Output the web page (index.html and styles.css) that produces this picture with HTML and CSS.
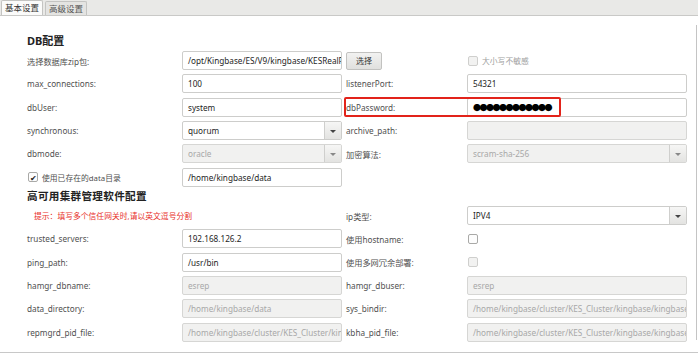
FILE: index.html
```html
<!DOCTYPE html>
<html lang="zh">
<head>
  <meta charset="UTF-8" />
  <title>基本设置</title>
  <link rel="stylesheet" href="styles.css">
</head>
<body>
  <div class="tabs">
    <div class="tab active">基本设置</div>
    <div class="tab">高级设置</div>
  </div>

  <div class="panel">
    <h2 class="section">DB配置</h2>
    <div class="form">
      <label class="lbl">选择数据库zip包:</label>
      <div class="field"><span class="txt">/opt/Kingbase/ES/V9/kingbase/KESRealPro</span></div>
      <div class="lbl2"><button class="btn">选择</button></div>
      <div class="check-line"><span class="box disabled"></span><span class="muted">大小写不敏感</span></div>

      <label class="lbl">max_connections:</label>
      <div class="field"><span class="txt">100</span></div>
      <label class="lbl2">listenerPort:</label>
      <div class="field"><span class="txt">54321</span></div>

      <label class="lbl">dbUser:</label>
      <div class="field"><span class="txt">system</span></div>
      <label class="lbl2 pw-wrap">dbPassword:<span class="mark"></span></label>
      <div class="field"><span class="txt dots">●●●●●●●●●●●●</span></div>

      <label class="lbl">synchronous:</label>
      <div class="field combo"><span class="txt">quorum</span><span class="arrow"></span></div>
      <label class="lbl2">archive_path:</label>
      <div class="field off"></div>

      <label class="lbl">dbmode:</label>
      <div class="field combo off"><span class="txt">oracle</span><span class="arrow"></span></div>
      <label class="lbl2">加密算法:</label>
      <div class="field combo off"><span class="txt">scram-sha-256</span><span class="arrow"></span></div>

      <div class="lbl check-line"><span class="box checked">&#10004;</span>使用已存在的data目录</div>
      <div class="field"><span class="txt">/home/kingbase/data</span></div>
    </div>

    <h2 class="section second">高可用集群管理软件配置</h2>
    <div class="form">
      <div class="hint">提示：填写多个信任网关时,请以英文逗号分割</div>
      <label class="lbl2">ip类型:</label>
      <div class="field combo"><span class="txt">IPV4</span><span class="arrow"></span></div>

      <label class="lbl">trusted_servers:</label>
      <div class="field"><span class="txt">192.168.126.2</span></div>
      <label class="lbl2">使用hostname:</label>
      <div class="check-line"><span class="box"></span></div>

      <label class="lbl">ping_path:</label>
      <div class="field"><span class="txt">/usr/bin</span></div>
      <label class="lbl2">使用多网冗余部署:</label>
      <div class="check-line"><span class="box disabled"></span></div>

      <label class="lbl">hamgr_dbname:</label>
      <div class="field off"><span class="txt">esrep</span></div>
      <label class="lbl2">hamgr_dbuser:</label>
      <div class="field off"><span class="txt">esrep</span></div>

      <label class="lbl">data_directory:</label>
      <div class="field off"><span class="txt">/home/kingbase/data</span></div>
      <label class="lbl2">sys_bindir:</label>
      <div class="field off"><span class="txt">/home/kingbase/cluster/KES_Cluster/kingbase/kingbase/bin</span></div>

      <label class="lbl">repmgrd_pid_file:</label>
      <div class="field off"><span class="txt">/home/kingbase/cluster/KES_Cluster/kingbase</span></div>
      <label class="lbl2">kbha_pid_file:</label>
      <div class="field off"><span class="txt">/home/kingbase/cluster/KES_Cluster/kingbase/kingbase/hamgr</span></div>
    </div>
  </div>
  <div class="bottom-line"></div>
</body>
</html>
```

FILE: styles.css
```css
body {
  margin: 0;
  padding: 0;
  background: #ffffff;
  font-family: "Noto Sans", "Noto Sans CJK SC", sans-serif;
  color: #4a4a4a;
  width: 698px;
  height: 354px;
  overflow: hidden;
}
.tabs {
  display: flex;
  align-items: flex-end;
  height: 16px;
  background: #e9e9e7;
  border-bottom: 1px solid #c9c9c7;
  box-sizing: border-box;
  padding-left: 1px;
}
.tab {
  font-size: 8.5px;
  line-height: 13px;
  height: 14px;
  padding: 0 3px;
  margin-right: 2px;
  color: #555;
  border: 1px solid #c4c4c2;
  border-bottom: none;
  border-radius: 2px 2px 0 0;
  background: #e4e4e2;
  box-sizing: border-box;
}
.tab.active {
  background: #fbfbfa;
  color: #333;
  height: 15px;
}
.panel {
  margin-top: 9px;
  padding: 8px 0 0 27px;
  width: 697px;
  height: 315px;
  border-right: 1px solid #c4c4c4;
  box-sizing: border-box;
}
.form {
  display: grid;
  grid-template-columns: 155px 160px 125px 220px;
  grid-auto-rows: 23.33px;
  align-items: center;
  font-size: 8.2px;
}
.section {
  margin: 0;
  height: 16px;
  line-height: 16px;
  font-size: 11px;
  font-weight: bold;
  color: #222;
}
.section.second {
  font-size: 10.6px;
  letter-spacing: 0.3px;
  height: 15px;
  line-height: 15px;
}
.lbl {
  color: #505050;
}
.lbl2 {
  padding-left: 4px;
  color: #505050;
}
.pw-wrap {
  position: relative;
}
.mark {
  position: absolute;
  z-index: 2;
  left: 2px;
  top: 50%;
  margin-top: -10px;
  width: 217px;
  height: 20px;
  border: 2px solid #e2231a;
  border-radius: 2px;
  box-sizing: border-box;
}
.field {
  position: relative;
  height: 19px;
  border: 1px solid #cdcdcb;
  border-radius: 2px;
  background: #fff;
  box-sizing: border-box;
  display: flex;
  align-items: center;
  overflow: hidden;
  white-space: nowrap;
}
.txt {
  padding-left: 5px;
  font-size: 8.2px;
  color: #1e1e1e;
}
.dots {
  font-size: 8px;
  letter-spacing: -1.5px;
  color: #000;
}
.field.off {
  background: #f1f1f0;
  border-color: #d6d6d4;
}
.field.off .txt {
  color: #a8a8a8;
}
.combo .arrow {
  position: absolute;
  right: 0;
  top: 0;
  bottom: 0;
  width: 16px;
  border-left: 1px solid #cfcfcd;
  background: linear-gradient(#f6f6f5, #e3e3e1);
}
.combo .arrow::after {
  content: "";
  position: absolute;
  left: 5px;
  top: 8px;
  border-left: 3px solid transparent;
  border-right: 3px solid transparent;
  border-top: 3px solid #444;
}
.combo.off .arrow::after {
  border-top-color: #888;
}
.btn {
  font-family: inherit;
  font-size: 8px;
  color: #333;
  width: 36px;
  height: 18px;
  padding: 0;
  border: 1px solid #c2c2c0;
  border-radius: 2px;
  background: linear-gradient(#f2f2f1, #e0e0de);
}
.check-line {
  display: flex;
  align-items: center;
  gap: 4px;
  padding-left: 1px;
}
.lbl.check-line {
  font-size: 7.8px;
}
.muted {
  color: #a0a0a0;
  font-size: 7.8px;
}
.box {
  width: 10px;
  height: 10px;
  border: 1px solid #a9a9a7;
  border-radius: 2px;
  background: #fdfdfd;
  box-sizing: border-box;
  font-size: 8px;
  line-height: 9px;
  text-align: center;
  color: #222;
}
.box.disabled {
  border-color: #cfcfcd;
  background: #f2f2f1;
}
.hint {
  grid-column: 1 / 3;
  padding-left: 7px;
  color: #e8302a;
  font-size: 7.8px;
}
.bottom-line {
  margin-top: 12px;
  height: 1px;
  background: #c8c8c8;
}
```
